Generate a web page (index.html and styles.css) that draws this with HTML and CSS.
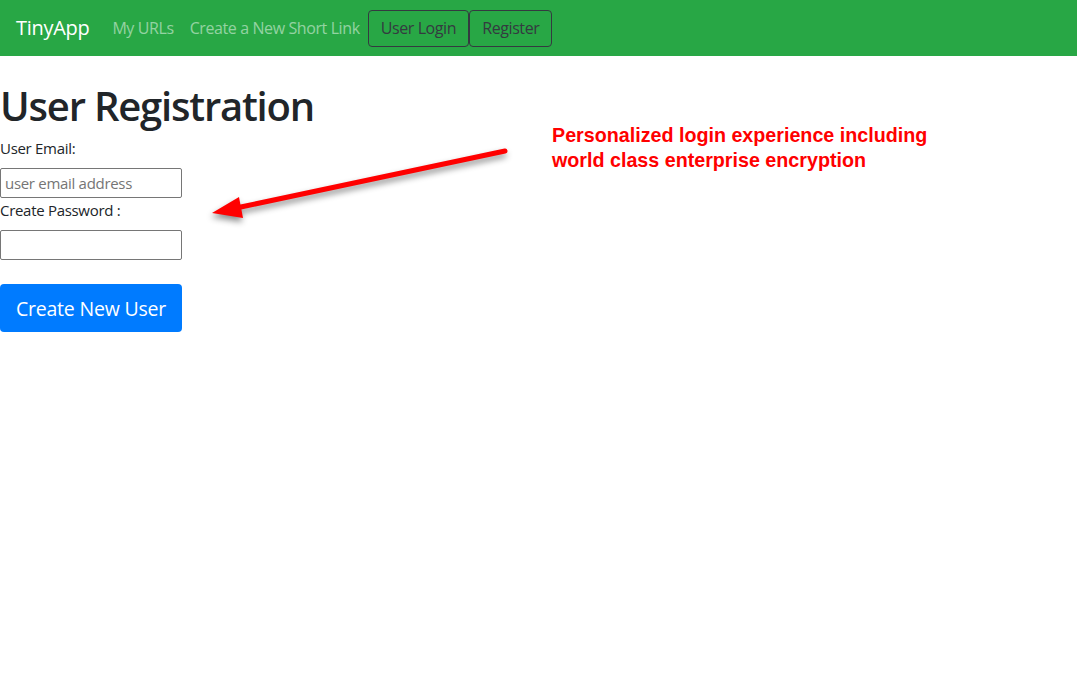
FILE: index.html
```html
<!DOCTYPE html>
<html lang="en">
<head>
<meta charset="utf-8">
<title>TinyApp - Register</title>
<link rel="stylesheet" href="styles.css">
</head>
<body>
<nav class="navbar">
  <a class="brand" href="#">TinyApp</a>
  <div class="nav-links">
    <a class="nav-link" href="#">My URLs</a>
    <a class="nav-link" href="#">Create a New Short Link</a>
  </div>
  <div class="nav-buttons">
    <button class="btn-outline">User Login</button>
    <button class="btn-outline">Register</button>
  </div>
</nav>
<main class="content">
  <h1 class="title">User Registration</h1>
  <form class="reg-form">
    <label class="field-label" for="email">User Email:</label>
    <input class="field" id="email" type="text" placeholder="user email address">
    <label class="field-label" for="pw">Create Password :</label>
    <input class="field" id="pw" type="password">
    <button class="btn-primary" type="button">Create New User</button>
  </form>
</main>
<div class="annotation">
  <svg class="arrow" width="320" height="90" viewBox="200 140 320 90">
    <line x1="505" y1="151" x2="236" y2="208" stroke="#ff0000" stroke-width="5" stroke-linecap="round"/>
    <polygon points="212,213 239,197 243,218" fill="#ff0000"/>
  </svg>
  <p class="note">Personalized login experience including<br>world class enterprise encryption</p>
</div>
</body>
</html>
```

FILE: styles.css
```css
* { box-sizing: border-box; }
body {
  margin: 0;
  font-family: "Open Sans", "Noto Sans", sans-serif;
  font-size: 16px;
  line-height: 1.5;
  color: #212529;
  background: #fff;
}
.navbar {
  display: flex;
  align-items: center;
  height: 56px;
  padding: 0 16px;
  background: #28a745;
}
.brand {
  color: #fff;
  font-size: 20px;
  text-decoration: none;
  margin-right: 15px;
  letter-spacing: -0.3px;
}
.nav-links { display: flex; }
.nav-link {
  color: rgba(255,255,255,0.5);
  text-decoration: none;
  padding: 0 8px;
  font-size: 16px;
  letter-spacing: -0.4px;
}
.nav-buttons { display: flex; }
.btn-outline {
  font-family: inherit;
  font-size: 16px;
  letter-spacing: -0.4px;
  color: #343a40;
  background: transparent;
  border: 1px solid #343a40;
  border-radius: 4px;
  height: 37px;
  padding: 0 12px;
}
.content { padding: 0; }
.title {
  margin: 26px 0 0;
  font-size: 40px;
  font-weight: 600;
  line-height: 1.2;
  letter-spacing: -1.2px;
}
.reg-form {
  display: flex;
  flex-direction: column;
  align-items: flex-start;
  margin-top: 6px;
}
.field-label {
  font-size: 15px;
  line-height: 24px;
  margin-bottom: 8px;
  letter-spacing: -0.3px;
}
.field {
  width: 182px;
  height: 30px;
  border: 1px solid #767676;
  border-radius: 2px;
  font-family: inherit;
  font-size: 15px;
  padding: 0 4px;
  margin: 0;
}
.field::placeholder { color: #757575; letter-spacing: -0.3px; }
.btn-primary {
  margin-top: 24px;
  width: 182px;
  height: 48px;
  border: 0;
  border-radius: 4px;
  background: #007bff;
  color: #fff;
  font-family: inherit;
  font-size: 19.5px;
  letter-spacing: -0.2px;
}
.annotation {
  position: absolute;
  left: 200px;
  top: 120px;
  width: 760px;
  height: 110px;
}
.arrow {
  position: absolute;
  left: 0;
  top: 20px;
  filter: drop-shadow(-1px 4px 3px rgba(0,0,0,0.45));
}
.note {
  position: absolute;
  left: 352px;
  top: 3px;
  margin: 0;
  font-family: "Liberation Sans", Arial, sans-serif;
  font-weight: bold;
  font-size: 19.7px;
  line-height: 25px;
  color: #ff0000;
}
```
